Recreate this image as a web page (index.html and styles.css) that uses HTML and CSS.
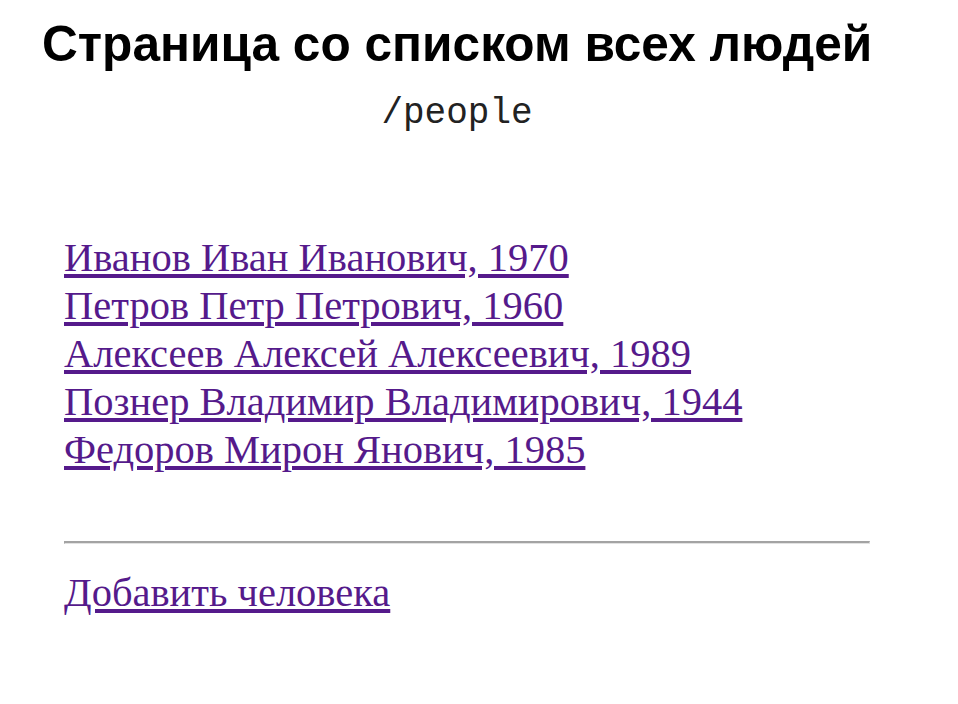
FILE: index.html
```html
<!DOCTYPE html>
<html lang="ru">
<head>
<meta charset="utf-8">
<title>Люди</title>
<link rel="stylesheet" href="styles.css">
</head>
<body>
<div class="page">
  <h1 class="title">Страница со списком всех людей</h1>
  <div class="route">/people</div>
  <ul class="people">
    <li><a class="link" href="#">Иванов Иван Иванович, 1970</a></li>
    <li><a class="link" href="#">Петров Петр Петрович, 1960</a></li>
    <li><a class="link" href="#">Алексеев Алексей Алексеевич, 1989</a></li>
    <li><a class="link" href="#">Познер Владимир Владимирович, 1944</a></li>
    <li><a class="link" href="#">Федоров Мирон Янович, 1985</a></li>
  </ul>
  <hr class="divider">
  <a class="link add" href="#">Добавить человека</a>
</div>
</body>
</html>
```

FILE: styles.css
```css
html, body {
  margin: 0;
  padding: 0;
  background: #ffffff;
}
.page {
  width: 830px;
  margin-left: 42px;
}
.title {
  margin: 16px 0 0;
  font-family: "Liberation Sans", Arial, sans-serif;
  font-weight: bold;
  font-size: 49.6px;
  line-height: 56px;
  color: #000;
  text-align: center;
  white-space: nowrap;
}
.route {
  margin-top: 22px;
  font-family: "Liberation Mono", "Courier New", monospace;
  font-size: 36px;
  line-height: 40px;
  color: #222;
  text-align: center;
}
.people {
  list-style: none;
  margin: 100px 0 0;
  padding: 0 0 0 22px;
}
.people li {
  font-family: "Liberation Serif", "Times New Roman", serif;
  font-size: 40.5px;
  line-height: 48px;
}
.link {
  font-family: "Liberation Serif", "Times New Roman", serif;
  font-size: 40.5px;
  color: #551a8b;
  text-decoration: underline;
}
.divider {
  margin: 67px 0 0 22px;
  width: 804px;
  height: 0;
  border: 0;
  border-top: 2px solid #a3a3a3;
  border-left: 1px solid #a3a3a3;
  border-bottom: 1px solid #e2e2e2;
  border-right: 1px solid #e2e2e2;
}
.add {
  display: inline-block;
  margin: 25px 0 0 22px;
  line-height: 48px;
}
```
